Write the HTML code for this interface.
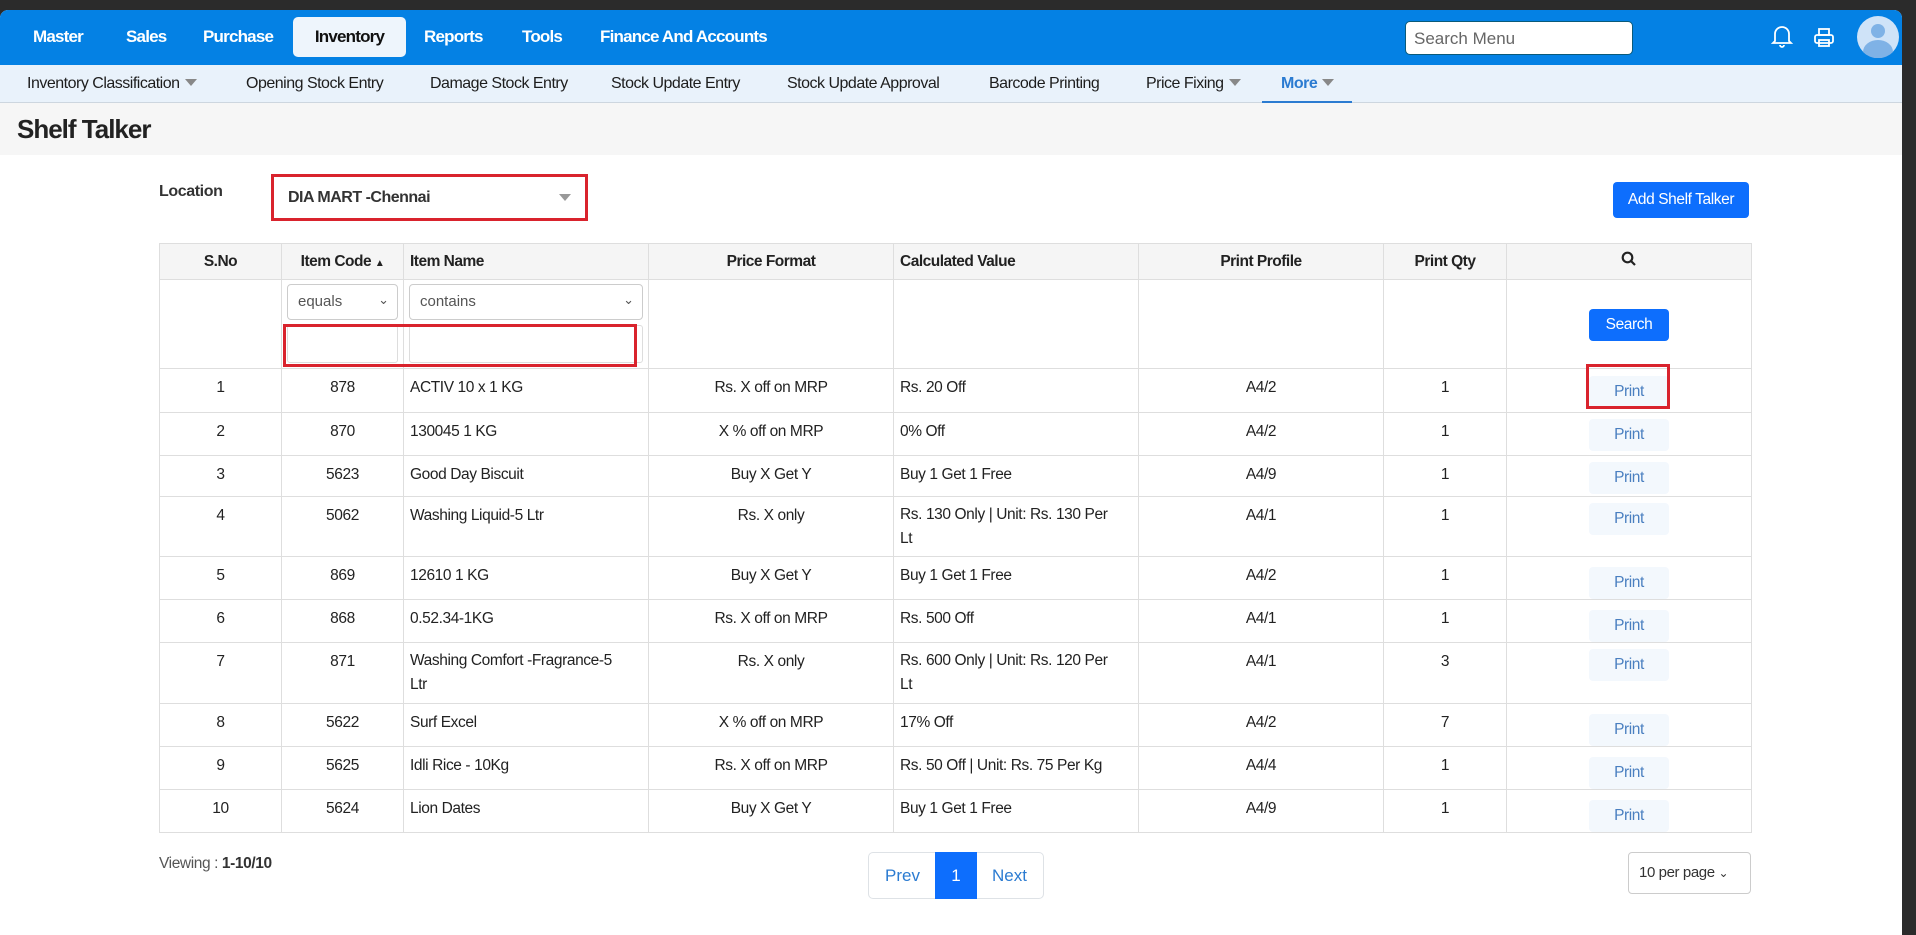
<!DOCTYPE html>
<html><head><meta charset="utf-8"><style>
*{box-sizing:border-box;margin:0;padding:0}
body{width:1916px;height:935px;background:#2b2b2b;font-family:"Liberation Sans",sans-serif;color:#222;position:relative;overflow:hidden}
#win{position:absolute;left:0;top:10px;width:1902px;height:925px;background:#fff;border-top-left-radius:8px;border-top-right-radius:8px;overflow:hidden}
#nav{position:absolute;left:0;top:0;width:100%;height:55px;background:#0481e4}
.ni{position:absolute;top:17px;font-size:17px;font-weight:bold;color:#fff;letter-spacing:-0.8px}
#inv{position:absolute;left:293px;top:7px;width:113px;height:40px;background:#eef5fc;border-radius:5px;color:#111;font-size:17px;font-weight:bold;text-align:center;line-height:40px;letter-spacing:-0.8px}
#search{position:absolute;left:1405px;top:11px;width:228px;height:34px;background:#fff;border:1px solid #0a5a7a;border-radius:5px;font-size:17px;color:#666;padding:7px 8px}
#sub{position:absolute;left:0;top:55px;width:100%;height:38px;background:#e9f2fb;border-bottom:1px solid #cdd6df}
.si{position:absolute;top:10px;font-size:16px;color:#1d1d1d;letter-spacing:-0.5px}
.tri{display:inline-block;width:0;height:0;border-left:6px solid transparent;border-right:6px solid transparent;border-top:7px solid #888;margin-left:5px;vertical-align:2px}
#title{position:absolute;left:0;top:93px;width:100%;height:52px;background:#f6f6f6}
#title h1{position:absolute;left:17px;top:11px;font-size:26px;font-weight:bold;color:#222;letter-spacing:-1px}
table{position:absolute;left:159px;top:233px;border-collapse:collapse;table-layout:fixed;font-size:15.5px;letter-spacing:-0.4px}
td,th{border:1px solid #dedede;padding:0 6px}
th{height:36px;background:#f5f5f5;font-weight:bold;font-size:15.5px;letter-spacing:-0.5px}
td{vertical-align:top;padding-top:10px}
.c{text-align:center}
.sel{position:absolute;height:36px;border:1px solid #ccc;border-radius:4px;background:#fff;font-size:15px;color:#555;padding:8px 10px}
.sel span{position:absolute;right:8px;top:7px;font-size:13px}
.inp{position:absolute;height:38px;border:1px solid #ddd;border-radius:3px;background:#fff}
.pb{display:inline-block;width:80px;height:32px;background:#f3f8fd;border-radius:4px;color:#4a7fc0;font-size:15.5px;line-height:32px;text-align:center}
.red{position:absolute;border:3px solid #d9232d}
</style></head><body>
<div id="win">
<div id="nav">
<div class="ni" style="left:33px">Master</div>
<div class="ni" style="left:126px">Sales</div>
<div class="ni" style="left:203px">Purchase</div>
<div id="inv">Inventory</div>
<div class="ni" style="left:424px">Reports</div>
<div class="ni" style="left:522px">Tools</div>
<div class="ni" style="left:600px">Finance And Accounts</div>
<div id="search">Search Menu</div>
<svg style="position:absolute;left:1770px;top:13px" width="24" height="26" viewBox="0 0 24 26" fill="none" stroke="#fff" stroke-width="1.8"><path d="M5 18V11a7 7 0 0 1 14 0v7l2 2H3z"/><path d="M10 22a2 2 0 0 0 4 0"/></svg>
<svg style="position:absolute;left:1813px;top:17px" width="22" height="22" viewBox="0 0 22 22" fill="none" stroke="#fff" stroke-width="1.8"><rect x="6" y="2" width="10" height="6"/><rect x="2" y="8" width="18" height="8" rx="2"/><rect x="6" y="13" width="10" height="6"/></svg>
<svg style="position:absolute;left:1857px;top:6px" width="42" height="42" viewBox="0 0 42 42"><circle cx="21" cy="21" r="21" fill="#cfe3f8"/><circle cx="21" cy="15" r="7" fill="#7fb2e6"/><path d="M6 36a15 12 0 0 1 30 0a21 21 0 0 1-30 0z" fill="#7fb2e6"/></svg>
</div>
<div id="sub">
<div class="si" style="left:27px">Inventory Classification<span class="tri"></span></div>
<div class="si" style="left:246px">Opening Stock Entry</div>
<div class="si" style="left:430px">Damage Stock Entry</div>
<div class="si" style="left:611px">Stock Update Entry</div>
<div class="si" style="left:787px">Stock Update Approval</div>
<div class="si" style="left:989px">Barcode Printing</div>
<div class="si" style="left:1146px">Price Fixing<span class="tri"></span></div>
<div class="si" style="left:1281px;color:#2b7bd1;font-weight:bold">More<span class="tri"></span></div>
<div style="position:absolute;left:1262px;top:36px;width:90px;height:2px;background:#2b7bd1"></div>
</div>
<div id="title"><h1>Shelf Talker</h1></div>

<div style="position:absolute;left:159px;top:173px;font-size:16px;font-weight:bold;color:#333;letter-spacing:-0.4px">Location</div>
<div style="position:absolute;left:271px;top:164px;width:317px;height:47px;border:3px solid #d9232d;background:#fff;font-size:16px;font-weight:bold;color:#333;padding:12px 14px;letter-spacing:-0.5px">DIA MART -Chennai<span style="position:absolute;right:14px;top:17px;border-left:6px solid transparent;border-right:6px solid transparent;border-top:7px solid #999"></span></div>
<div style="position:absolute;left:1613px;top:172px;width:136px;height:36px;background:#0d6efd;border-radius:4px;color:#fff;font-size:15.5px;line-height:36px;text-align:center;letter-spacing:-0.4px">Add Shelf Talker</div>

<table>
<colgroup><col style="width:122px"><col style="width:122px"><col style="width:245px"><col style="width:245px"><col style="width:245px"><col style="width:245px"><col style="width:123px"><col style="width:245px"></colgroup>
<tr><th>S.No</th><th>Item Code <span style="font-size:10px">▲</span></th><th style="text-align:left">Item Name</th><th>Price Format</th><th style="text-align:left">Calculated Value</th><th>Print Profile</th><th>Print Qty</th><th><svg width="16" height="16" viewBox="0 0 16 16" fill="none" stroke="#222" stroke-width="2.2"><circle cx="6.5" cy="6.5" r="4.8"/><path d="M10 10l4 4"/></svg></th></tr>
<tr style="height:89px"><td></td><td></td><td></td><td></td><td></td><td></td><td></td><td class="c" style="padding-top:29px"><span class="pb" style="background:#0d6efd;color:#fff">Search</span></td></tr>
<tr style="height:44px"><td class="c">1</td><td class="c">878</td><td>ACTIV 10 x 1 KG</td><td class="c">Rs. X off on MRP</td><td>Rs. 20 Off</td><td class="c">A4/2</td><td class="c">1</td><td class="c" style="padding-top:3px"><span class="pb" style="margin-top:4px">Print</span></td></tr>
<tr style="height:43px"><td class="c">2</td><td class="c">870</td><td>130045 1 KG</td><td class="c">X % off on MRP</td><td>0% Off</td><td class="c">A4/2</td><td class="c">1</td><td class="c" style="padding-top:6px"><span class="pb">Print</span></td></tr>
<tr style="height:41px"><td class="c">3</td><td class="c">5623</td><td>Good Day Biscuit</td><td class="c">Buy X Get Y</td><td>Buy 1 Get 1 Free</td><td class="c">A4/9</td><td class="c">1</td><td class="c" style="padding-top:6px"><span class="pb">Print</span></td></tr>
<tr style="height:60px"><td class="c">4</td><td class="c">5062</td><td>Washing Liquid-5 Ltr</td><td class="c">Rs. X only</td><td style="line-height:24px;padding-top:6px">Rs. 130 Only | Unit: Rs. 130 Per<br>Lt</td><td class="c">A4/1</td><td class="c">1</td><td class="c" style="padding-top:6px"><span class="pb">Print</span></td></tr>
<tr style="height:43px"><td class="c">5</td><td class="c">869</td><td>12610 1 KG</td><td class="c">Buy X Get Y</td><td>Buy 1 Get 1 Free</td><td class="c">A4/2</td><td class="c">1</td><td class="c" style="padding-top:10px"><span class="pb">Print</span></td></tr>
<tr style="height:43px"><td class="c">6</td><td class="c">868</td><td>0.52.34-1KG</td><td class="c">Rs. X off on MRP</td><td>Rs. 500 Off</td><td class="c">A4/1</td><td class="c">1</td><td class="c" style="padding-top:10px"><span class="pb">Print</span></td></tr>
<tr style="height:61px"><td class="c">7</td><td class="c">871</td><td style="line-height:24px;padding-top:6px">Washing Comfort -Fragrance-5<br>Ltr</td><td class="c">Rs. X only</td><td style="line-height:24px;padding-top:6px">Rs. 600 Only | Unit: Rs. 120 Per<br>Lt</td><td class="c">A4/1</td><td class="c">3</td><td class="c" style="padding-top:6px"><span class="pb">Print</span></td></tr>
<tr style="height:42px"><td class="c">8</td><td class="c">5622</td><td>Surf Excel</td><td class="c">X % off on MRP</td><td>17% Off</td><td class="c">A4/2</td><td class="c">7</td><td class="c" style="padding-top:10px"><span class="pb">Print</span></td></tr>
<tr style="height:43px"><td class="c">9</td><td class="c">5625</td><td>Idli Rice - 10Kg</td><td class="c">Rs. X off on MRP</td><td>Rs. 50 Off | Unit: Rs. 75 Per Kg</td><td class="c">A4/4</td><td class="c">1</td><td class="c" style="padding-top:10px"><span class="pb">Print</span></td></tr>
<tr style="height:43px"><td class="c">10</td><td class="c">5624</td><td>Lion Dates</td><td class="c">Buy X Get Y</td><td>Buy 1 Get 1 Free</td><td class="c">A4/9</td><td class="c">1</td><td class="c" style="padding-top:10px"><span class="pb">Print</span></td></tr>
</table>

<div class="sel" style="left:287px;top:274px;width:111px">equals<span>⌄</span></div>
<div class="sel" style="left:409px;top:274px;width:234px">contains<span>⌄</span></div>
<div class="inp" style="left:287px;top:315px;width:111px"></div>
<div class="inp" style="left:409px;top:315px;width:234px"></div>
<div class="red" style="left:283px;top:314px;width:354px;height:43px"></div>
<div class="red" style="left:1586px;top:354px;width:84px;height:45px"></div>

<div style="position:absolute;left:159px;top:845px;font-size:15.5px;color:#555;letter-spacing:-0.4px">Viewing : <b style="color:#333">1-10/10</b></div>
<div style="position:absolute;left:868px;top:842px;width:176px;height:47px;border:1px solid #dee2e6;border-radius:5px;background:#fff;font-size:17px;color:#2b7bd1">
<span style="position:absolute;left:16px;top:13px">Prev</span>
<span style="position:absolute;left:66px;top:-1px;width:42px;height:47px;background:#0d6efd;color:#fff;text-align:center;line-height:47px">1</span>
<span style="position:absolute;left:123px;top:13px">Next</span></div>
<div style="position:absolute;left:1628px;top:842px;width:123px;height:42px;border:1px solid #ccc;border-radius:4px;background:#fff;font-size:15px;color:#333;padding:11px 10px;letter-spacing:-0.4px">10 per page <span style="font-size:12px">⌄</span></div>
</div>
</body></html>
